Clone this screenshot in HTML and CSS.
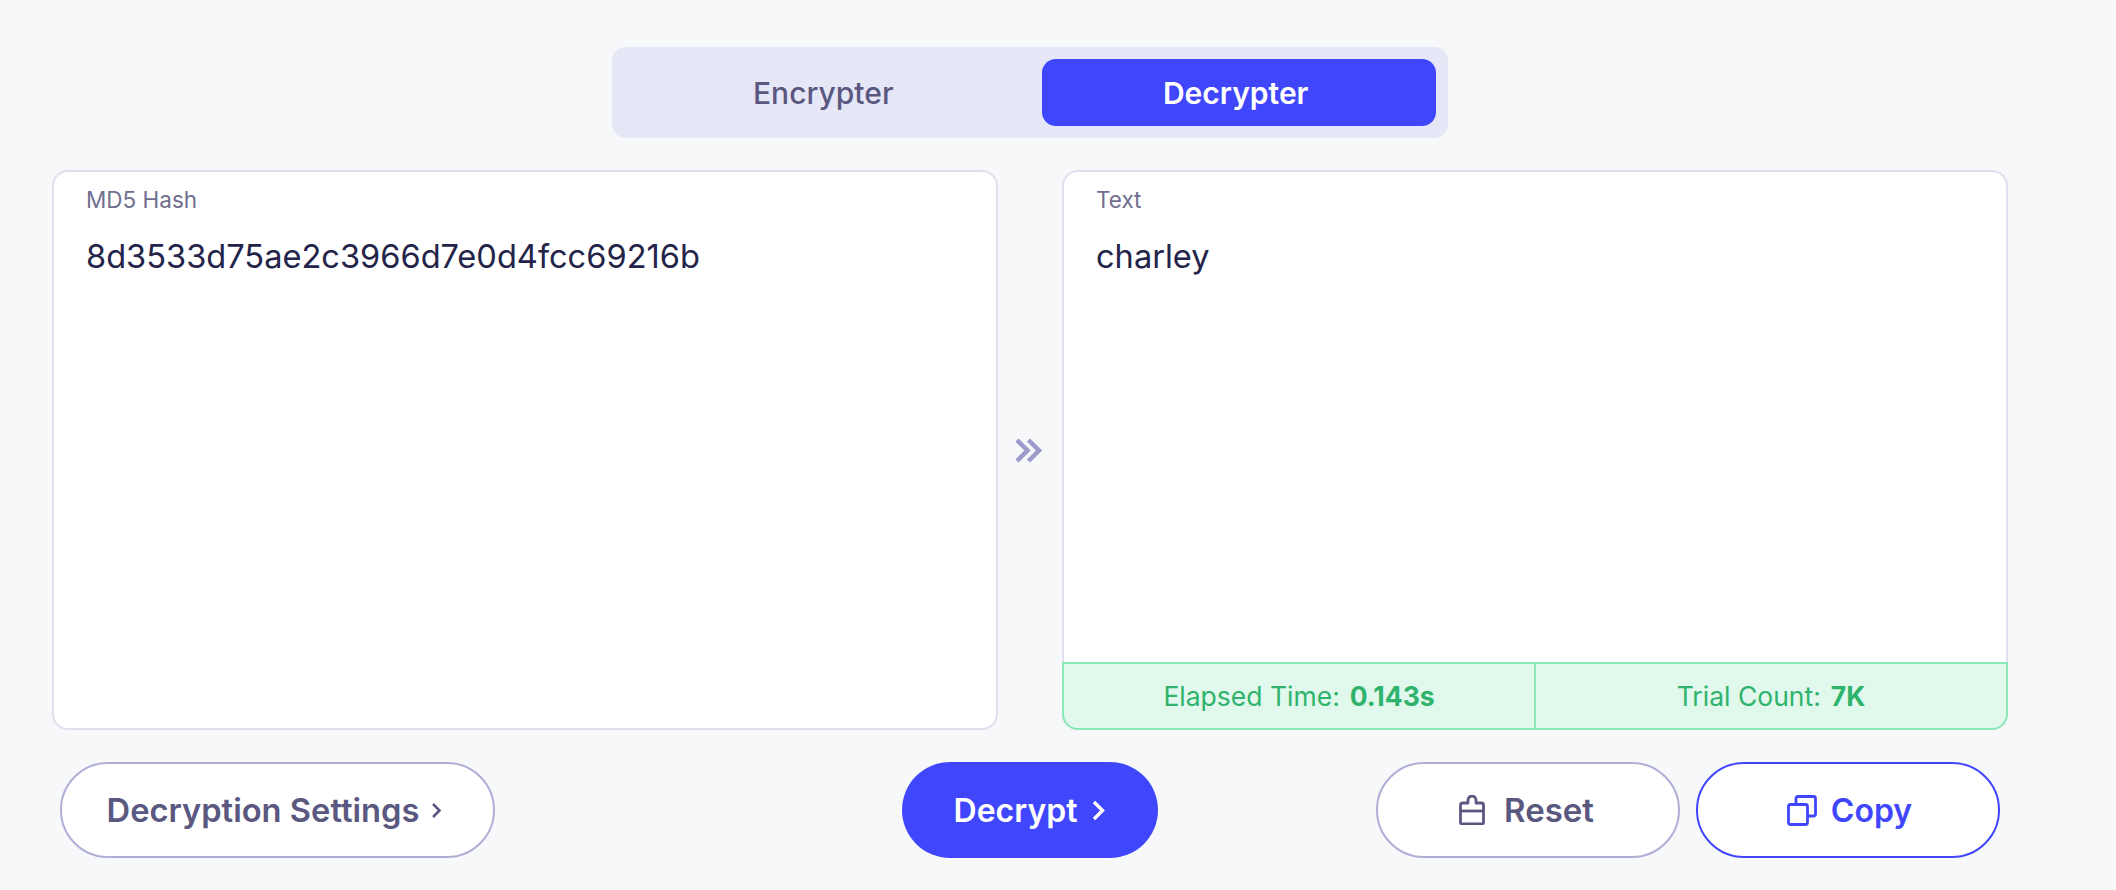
FILE: index.html
```html
<!DOCTYPE html>
<html lang="en">
	<head>
		<meta charset="UTF-8">
		<title>MD5 Decrypter</title>
		<link rel="stylesheet" href="styles.css">
	</head>
	<body>
		<div class="tool">
			<div class="mode-tabs">
				<span class="mode-tab">Encrypter</span>
				<span class="mode-tab active">Decrypter</span>
			</div>

			<div class="panels">
				<div class="panel">
					<div class="panel-body">
						<div class="panel-label">MD5 Hash</div>
						<div class="panel-value">8d3533d75ae2c3966d7e0d4fcc69216b</div>
					</div>
				</div>
				<div class="panel-arrow">
					<svg width="27" height="25" viewBox="0 0 27 25" fill="none" stroke="#9d9bcb" stroke-width="4.500">
						<path d="M2 2l10.500 10.500L2 23"/>
						<path d="M13.500 2L24 12.500 13.500 23"/>
					</svg>
				</div>
				<div class="panel">
					<div class="panel-body">
						<div class="panel-label">Text</div>
						<div class="panel-value">charley</div>
					</div>
					<div class="stats">
						<div class="stat">Elapsed Time: <b>0.143s</b></div>
						<div class="stat">Trial Count: <b>7K</b></div>
					</div>
				</div>
			</div>

			<div class="actions">
				<div class="actions-left">
					<button class="btn settings-btn">Decryption Settings
						<svg width="11" height="17" viewBox="0 0 11 17" fill="none" stroke="#5a5880" stroke-width="2.600"><path d="M2 2l6.500 6.500L2 15"/></svg>
					</button>
				</div>
				<button class="btn decrypt-btn">Decrypt
					<svg width="14" height="21" viewBox="0 0 14 21" fill="none" stroke="#fff" stroke-width="3.400"><path d="M2 2l8.500 8.500L2 19"/></svg>
				</button>
				<div class="actions-right">
					<button class="btn reset-btn">
						<svg width="26" height="30" viewBox="0 0 26 30" fill="none" stroke="#5a5880" stroke-width="2.800" stroke-linejoin="round">
							<path d="M1.500 10a2 2 0 0 1 2-2h5.500V5a4 4 0 0 1 8 0v3h5.500a2 2 0 0 1 2 2v17.500a1.500 1.500 0 0 1-1.500 1.500H3a1.500 1.500 0 0 1-1.500-1.500z"/>
							<path d="M1.500 16h23"/>
						</svg>
						Reset
					</button>
					<button class="btn copy-btn">
						<svg width="30" height="31" viewBox="0 0 30 31" fill="none" stroke="#3f46fb" stroke-width="2.800" stroke-linejoin="round">
							<rect x="1.500" y="9.500" width="19" height="20" rx="2"/>
							<path d="M9 9.500V3.500a2 2 0 0 1 2-2h15.500a2 2 0 0 1 2 2V19a2 2 0 0 1-2 2h-6"/>
						</svg>
						Copy
					</button>
				</div>
			</div>
		</div>
	</body>
</html>
```

FILE: styles.css
```css
body {
	margin: 0;
	background-color: #f7f8fa;
	font-family: 'Inter', 'Liberation Sans', sans-serif;
	color: #24244a;
}

.tool {
	width: 1956px;
	margin-left: 52px;
	padding-top: 47px;
}

.mode-tabs {
	width: 836px;
	height: 91px;
	box-sizing: border-box;
	margin: 0 auto 32px;
	padding: 12px;
	display: flex;
	gap: 24px;
	background-color: #e6e7f6;
	border-radius: 14px;
}

.mode-tab {
	flex: 1;
	display: flex;
	align-items: center;
	justify-content: center;
	padding-left: 5px;
	font-size: 30px;
	font-weight: 500;
	color: #5a5880;
	border-radius: 14px;
}

.mode-tab.active {
	padding-left: 0;
	padding-right: 6px;
	background-color: #3f46fb;
	color: #fff;
	font-weight: 600;
}

.panels {
	display: grid;
	grid-template-columns: 1fr 64px 1fr;
	height: 560px;
}

.panel {
	display: flex;
	flex-direction: column;
	background-color: #fff;
	border: 2px solid #dfdfee;
	border-radius: 16px;
}

.panel-body {
	flex: 1;
	padding: 14px 32px;
}

.panel-label {
	font-size: 22.500px;
	line-height: 28px;
	color: #6f6e8e;
}

.panel-value {
	margin-top: 20px;
	font-size: 32.600px;
	line-height: 44px;
	color: #24244a;
}

.panel-arrow {
	display: flex;
	align-items: center;
	justify-content: center;
	padding-right: 3px;
}

.stats {
	display: flex;
	height: 68px;
	box-sizing: border-box;
	margin: 0 -2px -2px;
	background-color: #e1f8ec;
	border: 2px solid #8be8b8;
	border-radius: 0 0 16px 16px;
}

.stat {
	flex: 1;
	display: flex;
	align-items: center;
	justify-content: center;
	gap: 10px;
	font-size: 26.500px;
	color: #2fb36c;
}

.stat + .stat {
	border-left: 2px solid #8be8b8;
}

.stat b {
	font-weight: 700;
}

.actions {
	display: grid;
	grid-template-columns: 1fr auto 1fr;
	align-items: center;
	margin-top: 32px;
	padding: 0 8px;
}

.actions-right {
	display: flex;
	justify-content: flex-end;
	gap: 16px;
}

.btn {
	display: inline-flex;
	align-items: center;
	justify-content: center;
	height: 96px;
	box-sizing: border-box;
	padding: 0;
	font-family: inherit;
	font-size: 32px;
	font-weight: 600;
	background-color: #fff;
	border: 2px solid #b0aed6;
	border-radius: 48px;
	color: #5a5880;
}

.settings-btn {
	width: 435px;
	gap: 12px;
	padding-right: 6px;
	font-size: 32.700px;
}

.decrypt-btn {
	width: 256px;
	gap: 15px;
	background-color: #3f46fb;
	border: none;
	color: #fff;
}

.reset-btn {
	width: 304px;
	gap: 19px;
	padding-right: 3px;
	font-size: 33px;
}

.copy-btn {
	width: 304px;
	gap: 14px;
	padding-left: 3px;
	border-color: #3f46fb;
	color: #3f46fb;
}
```
